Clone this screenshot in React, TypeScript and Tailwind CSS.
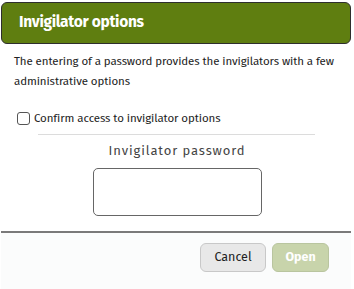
import React from "react";

const font = { fontFamily: '"Fira Sans", "Noto Sans", "Open Sans", sans-serif' };

export default function App() {
  return (
    <div className="relative w-[354px] h-[289px] overflow-hidden bg-white text-[#222]" style={font}>
      {/* header */}
      <div className="mx-[1px] mt-[2px] mr-[3px] h-[42px] rounded-[6px] border border-[#2e2e2e] bg-[#5f7e10] pl-[17px] flex items-center">
        <h1 className="text-[15.5px] font-bold text-white tracking-[-0.3px]">Invigilator options</h1>
      </div>

      {/* body */}
      <div className="px-[14px] pt-[7px]">
        <p className="text-[11.5px] leading-[20px] text-[#222] tracking-[-0.1px]">
          The entering of a password provides the invigilators with a few administrative options
        </p>

        <label className="mt-[19px] ml-[3px] flex items-center gap-[4px] text-[11.5px] tracking-[-0.1px]">
          <input type="checkbox" className="w-[13px] h-[13px] appearance-none rounded-[3px] border border-[#555] bg-white" />
          <span>Confirm access to invigilator options</span>
        </label>

        <div className="mt-[7px] ml-[24px] w-[277px] border-t border-[#dcdcdc]" />

        <div className="mt-[6px] text-center text-[13px] tracking-[0.9px] text-[#444]">Invigilator password</div>

        <div className="mt-[7px] flex justify-center">
          <input type="password" className="w-[169px] h-[48px] rounded-[5px] border border-[#666] bg-white" />
        </div>
      </div>

      {/* footer */}
      <div className="mt-[15px] mx-[1px] mr-[3px] border-t-2 border-[#7a7a7a] bg-[#fbfcfc] h-[60px] flex justify-end items-start pt-[10px] pr-[22px] gap-[6px]">
        <button className="h-[29px] w-[66px] rounded-[6px] border border-[#c8c8c8] bg-[#e8e8e8] text-[12.5px] text-[#222]">
          Cancel
        </button>
        <button className="h-[29px] w-[57px] rounded-[6px] border border-[#b9c59f] bg-[#c8d4ab] text-[12.5px] font-bold text-white">
          Open
        </button>
      </div>
    </div>
  );
}
